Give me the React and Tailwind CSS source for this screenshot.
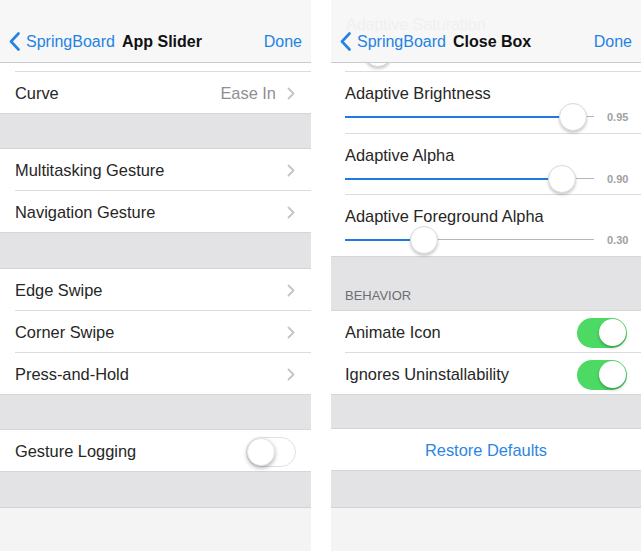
import React from 'react'

const font = { fontFamily: '"Liberation Sans", Arial, sans-serif' }

function BackChevron() {
  return (
    <svg width="11" height="19" viewBox="0 0 11 19" className="text-[#2483e2]">
      <polyline points="9.5,1.5 2,9.5 9.5,17.5" fill="none" stroke="currentColor" strokeWidth="2.6" strokeLinecap="round" strokeLinejoin="round" />
    </svg>
  )
}

function RowChevron() {
  return (
    <svg width="8" height="13" viewBox="0 0 8 13">
      <polyline points="1.5,1.5 6.5,6.5 1.5,11.5" fill="none" stroke="#c4c4c8" strokeWidth="1.8" strokeLinecap="round" strokeLinejoin="round" />
    </svg>
  )
}

function NavBar({ title, ghost }) {
  return (
    <div className="relative h-[63px] shrink-0 border-b border-[#cbcbcf] bg-[#f7f7f8]">
      {ghost && (
        <div className="absolute left-[15px] top-[15px] text-[16px] leading-[20px] text-[#f0f0f1]">{ghost}</div>
      )}
      <div className="relative flex h-full items-start pl-[9px] pr-[9px] pt-[32px] text-[16px] leading-[20px]">
        <BackChevron />
        <span className="ml-[6px] text-[#2483e2]">SpringBoard</span>
        <span className="ml-[7px] font-bold text-[#111]">{title}</span>
        <span className="ml-auto text-[#2483e2]">Done</span>
      </div>
    </div>
  )
}

function Sep({ inset = 'ml-[15px]' }) {
  return <div className={`${inset} h-px shrink-0 bg-[#dcdcde]`} />
}

function Gap({ h }) {
  return <div className={`${h} shrink-0 bg-[#e3e3e5]`} />
}

function Toggle({ on }) {
  return on ? (
    <div className="flex h-[30px] w-[50px] items-center justify-end rounded-full bg-[#4cd964] p-[1.5px]">
      <div className="h-[27px] w-[27px] rounded-full bg-white shadow-[0_2px_3px_rgba(0,0,0,0.25)]" />
    </div>
  ) : (
    <div className="flex h-[30px] w-[50px] items-center rounded-full border border-[#e1e1e3] bg-white">
      <div className="h-[28px] w-[28px] rounded-full border border-[#e6e6e6] bg-white shadow-[0_2px_4px_rgba(0,0,0,0.3)]" />
    </div>
  )
}

function Row({ label, value, chevron, toggle, pad = 'px-[15px]' }) {
  return (
    <div className={`flex h-[41px] shrink-0 items-center bg-white ${pad} pt-[2px] text-[16.4px] text-[#262626]`}>
      <span>{label}</span>
      <div className="ml-auto flex items-center">
        {value && <span className="mr-[11px] text-[#8e8e93]">{value}</span>}
        {chevron && <span className="mr-[1px] flex"><RowChevron /></span>}
        {toggle !== undefined && <Toggle on={toggle} />}
      </div>
    </div>
  )
}

function Thumb() {
  return <div className="h-[28px] w-[28px] rounded-full border border-[#d9d9db] bg-white shadow-[0_2px_3px_rgba(0,0,0,0.2)]" />
}

function SliderRow({ label, pos, value, h = 'h-[61px]' }) {
  return (
    <div className={`flex ${h} shrink-0 flex-col bg-white pl-[14px]`}>
      <div className="pt-[11px] text-[16.4px] leading-[20px] text-[#262626]">{label}</div>
      <div className="flex h-[28px] items-center">
        <div className="relative h-[28px] w-[249px]">
          <div className="absolute left-0 top-[13px] h-[2px] bg-[#1f7ae0]" style={{ width: pos }} />
          <div className="absolute right-0 top-[13px] h-px bg-[#b6b6b8]" style={{ left: pos }} />
          <div className="absolute top-0" style={{ left: pos - 14 }}>
            <Thumb />
          </div>
        </div>
        <span className="ml-[13px] text-[11px] font-bold text-[#a0a0a4]">{value}</span>
      </div>
    </div>
  )
}

function BottomBar() {
  return (
    <>
      <div className="h-px shrink-0 bg-[#d3d3d5]" />
      <div className="h-[43px] shrink-0 bg-[#f4f4f5]" />
    </>
  )
}

function LeftPanel() {
  return (
    <div className="flex h-[551px] w-[311px] flex-col overflow-hidden bg-[#e3e3e5]">
      <NavBar title="App Slider" />
      <div className="h-[8px] shrink-0 bg-white" />
      <div className="shrink-0 border-b border-[#d6d6d8] bg-white">
        <Sep />
        <Row label="Curve" value="Ease In" chevron />
      </div>
      <Gap h="h-[34px]" />
      <div className="shrink-0 border-y border-[#d6d6d8] bg-white">
        <Row label="Multitasking Gesture" chevron />
        <Sep />
        <Row label="Navigation Gesture" chevron />
      </div>
      <Gap h="h-[35px]" />
      <div className="shrink-0 border-y border-[#d6d6d8] bg-white">
        <Row label="Edge Swipe" chevron />
        <Sep />
        <Row label="Corner Swipe" chevron />
        <Sep />
        <Row label="Press-and-Hold" chevron />
      </div>
      <Gap h="h-[34px]" />
      <div className="shrink-0 border-y border-[#d6d6d8] bg-white">
        <Row label="Gesture Logging" toggle={false} />
      </div>
      <Gap h="h-[35px]" />
      <BottomBar />
    </div>
  )
}

function RightPanel() {
  return (
    <div className="flex h-[551px] w-[310px] flex-col overflow-hidden bg-[#e3e3e5]">
      <NavBar title="Close Box" ghost="Adaptive Saturation" />
      <div className="h-[8px] shrink-0 overflow-hidden bg-white">
        <div className="-mt-[24px] ml-[33px] w-[28px]">
          <Thumb />
        </div>
      </div>
      <div className="shrink-0 border-b border-[#d6d6d8] bg-white">
        <Sep inset="ml-[14px]" />
        <SliderRow label="Adaptive Brightness" pos={228} value="0.95" />
        <Sep inset="ml-[14px]" />
        <SliderRow label="Adaptive Alpha" pos={217} value="0.90" h="h-[60px]" />
        <Sep inset="ml-[14px]" />
        <SliderRow label="Adaptive Foreground Alpha" pos={79} value="0.30" />
      </div>
      <div className="flex h-[53px] shrink-0 items-end bg-[#e3e3e5] pb-[7px] pl-[14px] text-[13px] leading-[15px] text-[#6d6d72]">
        BEHAVIOR
      </div>
      <div className="shrink-0 border-y border-[#d6d6d8] bg-white">
        <Row label="Animate Icon" toggle={true} pad="pl-[14px] pr-[14px]" />
        <Sep inset="ml-[14px]" />
        <Row label="Ignores Uninstallability" toggle={true} pad="pl-[14px] pr-[14px]" />
      </div>
      <Gap h="h-[33px]" />
      <div className="flex h-[43px] shrink-0 items-center justify-center border-y border-[#d6d6d8] bg-white pt-[2px] text-[16.4px] text-[#2b86e2]">
        Restore Defaults
      </div>
      <Gap h="h-[36px]" />
      <BottomBar />
    </div>
  )
}

export default function App() {
  return (
    <div className="flex h-[558px] w-[642px] items-start gap-[20px] bg-white" style={font}>
      <LeftPanel />
      <RightPanel />
    </div>
  )
}
